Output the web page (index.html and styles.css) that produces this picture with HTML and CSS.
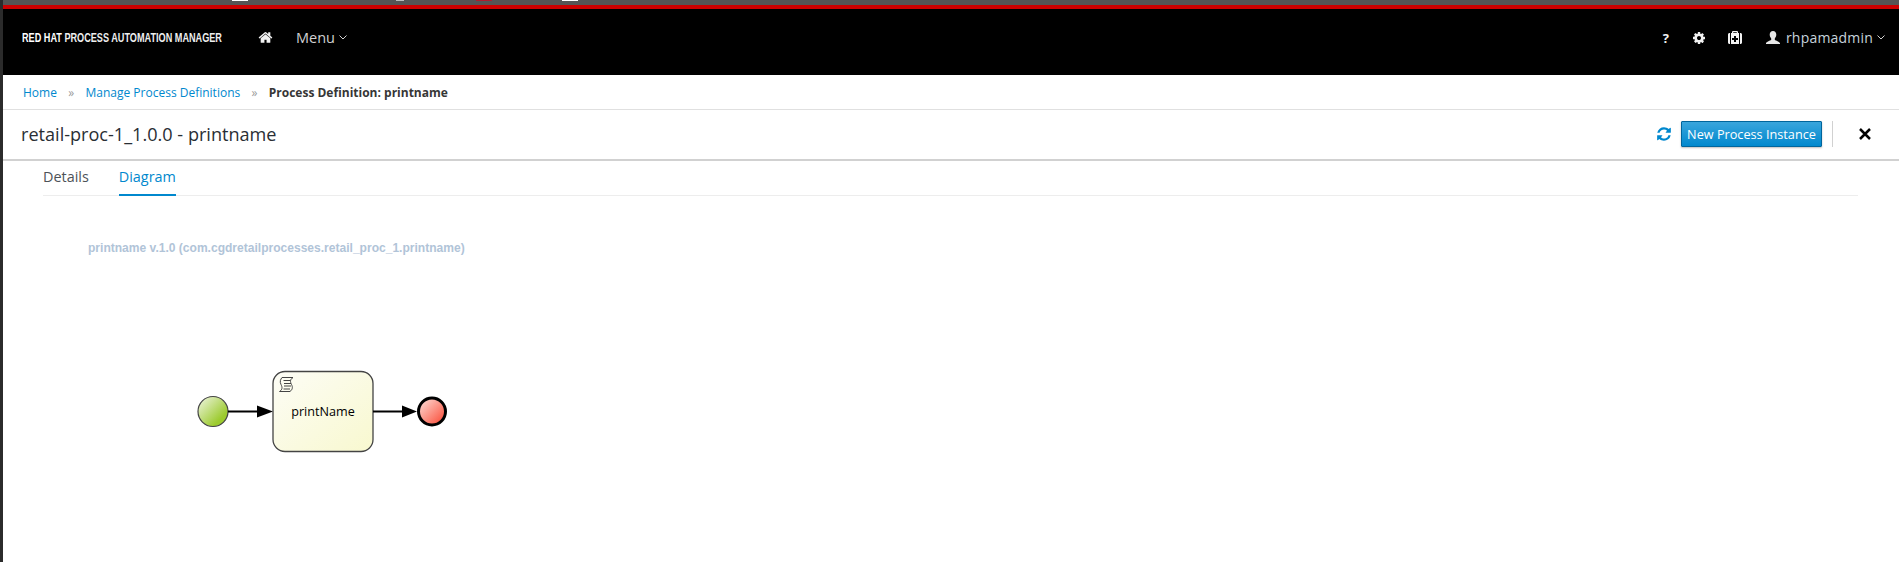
FILE: index.html
```html
<!DOCTYPE html>
<html lang="en">
<head>
    <meta charset="UTF-8">
    <title>Process Definition: printname</title>
    <link rel="stylesheet" href="styles.css">
</head>
<body>
    <div class="tabstrip">
        <span class="tab-mark mark-a"></span>
        <span class="tab-mark mark-b"></span>
        <span class="tab-mark mark-c"></span>
        <span class="tab-mark mark-d"></span>
    </div>

    <nav class="topnav">
        <div class="brand"><span class="brand-text"><b>RED HAT</b> PROCESS AUTOMATION MANAGER</span></div>
        <svg class="home-icon" viewBox="0 0 1792 1792"><path d="M1472 992v480q0 26-19 45t-45 19h-384v-384h-256v384h-384q-26 0-45-19t-19-45v-480q0-1 .5-3t.5-3l575-474 575 474q1 2 1 6zm223-69l-62 74q-8 9-21 11h-3q-13 0-21-7l-692-577-692 577q-12 8-24 7-13-2-21-11l-62-74q-8-10-7-23.5t11-21.5l719-599q32-26 76-26t76 26l244 204v-195q0-14 9-23t23-9h192q14 0 23 9t9 23v408l219 182q10 8 11 21.5t-7 23.5z"/></svg>
        <span class="nav-menu">Menu</span>
        <svg class="caret" viewBox="0 0 8 5"><path d="M.5.5 4 4 7.500.5"/></svg>

        <div class="nav-right">
            <span class="help">?</span>
            <svg class="gear-icon" viewBox="0 0 1792 1792"><path d="M1152 896q0-106-75-181t-181-75-181 75-75 181 75 181 181 75 181-75 75-181zm512-109v222q0 12-8 23t-20 13l-185 28q-19 54-39 91 35 50 107 138 10 12 10 25t-9 23q-27 37-99 108t-94 71q-12 0-26-9l-138-108q-44 23-91 38-16 136-29 186-7 28-36 28h-222q-14 0-24.500-8.500t-11.500-21.500l-28-184q-49-16-90-37l-141 107q-10 9-25 9-14 0-25-11-126-114-165-168-7-10-7-23 0-12 8-23 15-21 51-66.500t54-70.500q-27-50-41-99l-183-27q-13-2-21-12.500t-8-23.500v-222q0-12 8-23t19-13l186-28q14-46 39-92-40-57-107-138-10-12-10-24 0-10 9-23 26-36 98.500-107.500t94.500-71.500q13 0 26 10l138 107q44-23 91-38 16-136 29-186 7-28 36-28h222q14 0 24.500 8.500t11.500 21.500l28 184q49 16 90 37l142-107q9-9 24-9 13 0 25 10 129 119 165 170 7 8 7 22 0 12-8 23-15 21-51 66.500t-54 70.500q26 50 41 98l183 28q13 2 21 12.500t8 23.500z"/></svg>
            <svg class="kit-icon" viewBox="0 0 14 13"><path fill-rule="evenodd" d="M4 2V1.200C4 .5 4.500 0 5.200 0h3.600C9.500 0 10 .5 10 1.200V2h1v11H3V2zm1.200 0h3.600V1.200H5.200zM6 5v2H4v2h2v2h2V9h2V7H8V5zM0 3.500C0 2.700.7 2 1.500 2H2v11h-.5C.7 13 0 12.300 0 11.500zM12 2h.5c.8 0 1.500.7 1.500 1.500v8c0 .8-.7 1.500-1.500 1.500H12z"/></svg>
            <svg class="user-icon" viewBox="0 0 16 16"><path d="M8 1c2 0 3.300 1.500 3.300 3.600 0 1.600-.7 3-1.500 3.800v1.300c0 .6 3.400 1.200 5.200 3.300v1H1v-1c1.800-2.100 5.200-2.700 5.200-3.300V8.400C5.400 7.600 4.700 6.200 4.700 4.600 4.700 2.500 6 1 8 1z"/></svg>
            <span class="username">rhpamadmin</span>
            <svg class="caret" viewBox="0 0 8 5"><path d="M.5.5 4 4 7.500.5"/></svg>
        </div>
    </nav>

    <div class="breadcrumb">
        <a href="#">Home</a>
        <span class="sep">»</span>
        <a href="#">Manage Process Definitions</a>
        <span class="sep">»</span>
        <strong>Process Definition: printname</strong>
    </div>

    <header class="title-row">
        <h1>retail-proc-1_1.0.0 - printname</h1>
        <div class="title-actions">
            <svg class="refresh-icon" viewBox="0 0 1792 1792"><path d="M1639 1056q0 5-1 7-64 268-268 434.500t-478 166.500q-146 0-282.500-55t-243.500-157l-129 129q-19 19-45 19t-45-19-19-45v-448q0-26 19-45t45-19h448q26 0 45 19t19 45-19 45l-137 137q71 66 161 102t187 36q134 0 250-65t186-179q11-17 53-117 8-23 30-23h192q13 0 22.500 9.500t9.500 22.500zm25-800v448q0 26-19 45t-45 19h-448q-26 0-45-19t-19-45 19-45l138-138q-148-137-349-137-134 0-250 65t-186 179q-11 17-53 117-8 23-30 23h-199q-13 0-22.500-9.500t-9.500-22.500v-7q65-268 270-434.500t480-166.500q146 0 284 55.500t245 156.500l130-129q19-19 45-19t45 19 19 45z"/></svg>
            <button class="btn-primary">New Process Instance</button>
            <span class="divider"></span>
            <svg class="close-icon" viewBox="0 0 12 12"><path d="M1 1l10 10M11 1 1 11"/></svg>
        </div>
    </header>

    <div class="tabs">
        <a class="tab" href="#">Details</a>
        <a class="tab active" href="#">Diagram</a>
    </div>

    <main class="canvas">
        <svg class="diagram" width="460" height="310" viewBox="0 0 460 310">
            <defs>
                <linearGradient id="startFill" x1="0" y1="0" x2="1" y2="1">
                    <stop offset="0" stop-color="#f2f6e8"/>
                    <stop offset=".75" stop-color="#9ccb2e"/>
                </linearGradient>
                <linearGradient id="endFill" x1="0" y1="0" x2="1" y2="1">
                    <stop offset="0" stop-color="#fde6e1"/>
                    <stop offset=".85" stop-color="#fb5a47"/>
                </linearGradient>
                <linearGradient id="taskFill" x1="0" y1="0" x2="1" y2="1">
                    <stop offset="0" stop-color="#fdfdf6"/>
                    <stop offset="1" stop-color="#f8f8cf"/>
                </linearGradient>
            </defs>
            <text class="diagram-title" x="82" y="56">printname v.1.0 (com.cgdretailprocesses.retail_proc_1.printname)</text>

            <circle cx="207" cy="215.500" r="15" fill="url(#startFill)" stroke="#444" stroke-width="1.200"/>
            <path class="flow" d="M222 215.500h32"/>
            <path d="M251 209.500l16 6-16 6z"/>

            <rect x="267" y="175.500" width="100" height="80" rx="12" fill="url(#taskFill)" stroke="#444" stroke-width="1.300"/>
            <g class="script-mark" transform="translate(273 181)">
                <path d="M3 .5h11c-3 2-3 4-1.500 7s1 5-1.500 7H.5c3-2 3-4 1.500-7S1.500 2.500 3 .5z"/>
                <path d="M4.500 3.500h7M5 6.500h7M5 9h7M4.500 12h6.500"/>
            </g>
            <text class="task-label" x="317" y="220">printName</text>

            <path class="flow" d="M367 215.500h32"/>
            <path d="M396 209.500l15 6-15 6z"/>
            <circle cx="426" cy="215.500" r="13.500" fill="url(#endFill)" stroke="#000" stroke-width="3"/>
        </svg>
    </main>
</body>
</html>
```

FILE: styles.css
```css
html, body {
    height: 100%;
    overflow: hidden;
}

body {
    margin: 0;
    background-color: #fff;
    border-left: 3px solid #2b2b2b;
    box-sizing: border-box;
    font-family: 'Open Sans', sans-serif;
    color: #292e34;
}

/* strip of the browser window above the page */
.tabstrip {
    display: flex;
    height: 5px;
    background-color: #555;
    border-bottom: 4px solid #c00;
}

.tab-mark {
    height: 1px;
    width: 16px;
}

.mark-a { margin-left: 229px; background-color: #fff; }
.mark-b { margin-left: 148px; width: 8px; background-color: #bbb; }
.mark-c { margin-left: 72px; background-color: #b01c2e; }
.mark-d { margin-left: 70px; background-color: #fff; }

.topnav {
    display: flex;
    align-items: center;
    height: 57px;
    padding: 0 14px 9px 19px;
    background-color: #000;
    color: #d1d1d1;
}

.brand {
    width: 236px;
    font-family: 'Liberation Sans', sans-serif;
    font-size: 12.500px;
    font-weight: bold;
    white-space: nowrap;
}

/* no condensed face to hand, so squeeze the wordmark */
.brand-text {
    display: inline-block;
    transform: scaleX(.73);
    transform-origin: left center;
    color: #eee;
}

.brand-text b {
    color: #fff;
}

.home-icon {
    width: 15px;
    height: 15px;
    fill: #f2f2f2;
}

.nav-menu {
    margin-left: 23px;
    font-size: 14.500px;
}

.caret {
    width: 8px;
    height: 5px;
    margin-left: 4px;
    fill: none;
    stroke: #d1d1d1;
    stroke-width: 1;
}

.nav-right {
    display: flex;
    align-items: center;
    margin-left: auto;
}

.help {
    font-size: 13px;
    font-weight: bold;
    color: #f2f2f2;
}

.gear-icon {
    width: 14px;
    height: 14px;
    margin-left: 23px;
    fill: #f2f2f2;
}

.kit-icon {
    width: 14px;
    height: 13px;
    margin-left: 22px;
    fill: #f2f2f2;
}

.user-icon {
    width: 16px;
    height: 16px;
    margin-left: 23px;
    fill: #e6e6e6;
}

.username {
    margin-left: 5px;
    font-size: 14px;
    letter-spacing: .2px;
    color: #c6d3dc;
}

.breadcrumb {
    display: flex;
    align-items: center;
    height: 34px;
    padding-left: 20px;
    border-bottom: 1px solid #e0e0e0;
    font-size: 12px;
}

.breadcrumb a {
    color: #0088ce;
    text-decoration: none;
}

.breadcrumb .sep {
    margin: 0 11.300px;
    color: #9c9c9c;
}

.breadcrumb strong {
    color: #363636;
    font-weight: bold;
}

.title-row {
    display: flex;
    align-items: center;
    justify-content: space-between;
    height: 47px;
    padding: 0 28px 2px 18px;
    border-bottom: 2px solid #d1d1d1;
}

h1 {
    margin: 0;
    font-size: 18.100px;
    font-weight: normal;
    color: #292e34;
}

.title-actions {
    display: flex;
    align-items: center;
}

.refresh-icon {
    width: 16px;
    height: 16px;
    margin-right: 9px;
    fill: #0088ce;
}

.btn-primary {
    height: 26px;
    width: 141px;
    padding: 0;
    border: 1px solid #00659c;
    border-radius: 1px;
    background-image: linear-gradient(#39a5dc, #0088ce);
    box-shadow: 0 1px 2px rgba(0, 0, 0, 0.25);
    color: #fff;
    font-family: inherit;
    font-size: 12.700px;
}

.divider {
    width: 1px;
    height: 26px;
    margin: 0 26px 0 10px;
    background-color: #d1d1d1;
}

.close-icon {
    width: 12px;
    height: 12px;
    fill: none;
    stroke: #000;
    stroke-width: 2.500;
}

.tabs {
    display: flex;
    gap: 30px;
    height: 35px;
    margin: 0 41px 0 40px;
    border-bottom: 1px solid #ededed;
    box-sizing: border-box;
}

.tab {
    padding-top: 6px;
    margin-bottom: -1px;
    font-size: 14.400px;
    color: #4d5258;
    text-decoration: none;
}

.tab.active {
    color: #0088ce;
    border-bottom: 2px solid #0088ce;
}

.canvas {
    padding-left: 3px;
}

.diagram {
    display: block;
}

.diagram-title {
    font-family: 'Liberation Sans', Arial, sans-serif;
    font-size: 12.050px;
    font-weight: bold;
    fill: #b1c4d8;
}

.flow {
    fill: none;
    stroke: #000;
    stroke-width: 2;
}

.script-mark path {
    fill: none;
    stroke: #444;
    stroke-width: 1;
}

.task-label {
    font-family: 'Open Sans', sans-serif;
    font-size: 12.600px;
    text-anchor: middle;
    fill: #000;
}
```
